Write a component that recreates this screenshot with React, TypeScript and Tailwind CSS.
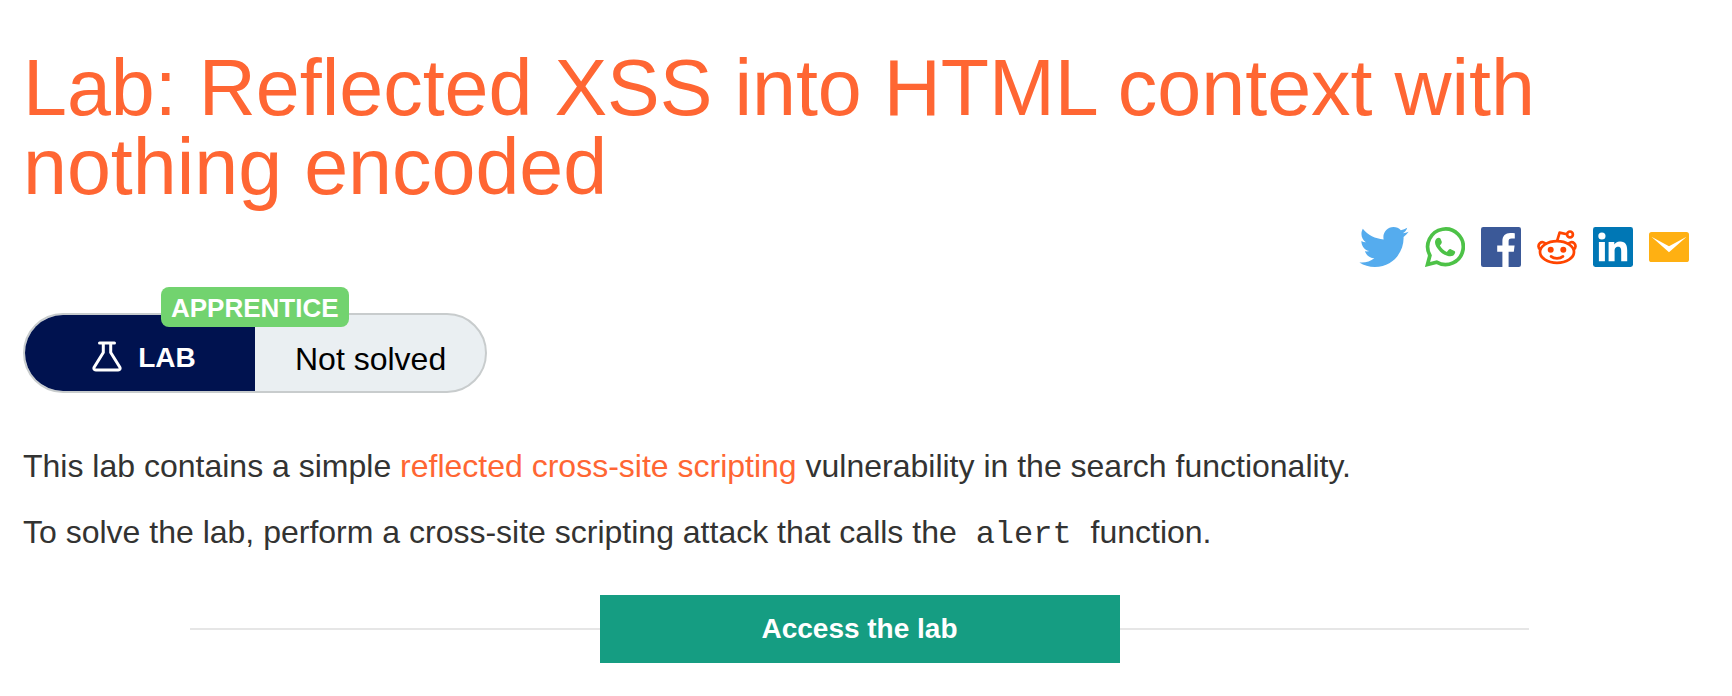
import { FaTwitter } from "react-icons/fa";

const shareClass = "block h-10 w-10";

function WhatsAppIcon() {
  return (
    <svg viewBox="0 0 40 40" className={shareClass} aria-hidden="true">
      <path
        d="M2.5 37.5 4.9 28.4A17.8 17.8 0 1 1 11.6 35.2Z"
        fill="none"
        stroke="#4dc247"
        strokeWidth="3.7"
      />
      <path
        d="M12 11.200c1-.8 2.700-.8 3.400.4l1.200 2.700c.4 1 .2 1.800-.5 2.700l-1.200 1.500c1.600 2.900 3.800 5 6.900 6.400l1.900-2.100c.6-.7 1.300-.9 2.100-.6l3.600 1.700c.7.4.9.9.7 1.900-.5 2.200-2.300 3.400-4.800 3.500-2.600 0-7-1.700-10.300-4.900-3.400-3.300-5-6.700-5-9.100 0-1.800.8-3.200 2-4.100z"
        fill="#4dc247"
      />
    </svg>
  );
}

function FacebookIcon() {
  return (
    <svg viewBox="0 0 40 40" className={shareClass} aria-hidden="true">
      <rect width="40" height="40" rx="2.2" fill="#3b5998" />
      <path
        d="M21.4 40V24.800h-5.200v-6.300h5.200V14c0-5.200 3.200-8 7.800-8 2.200 0 4.100.2 4.600.2v5.400h-3.200c-2.500 0-3 1.200-3 2.900v4h6l-.8 6.300h-5.200V40z"
        fill="#fff"
      />
    </svg>
  );
}

function RedditIcon() {
  return (
    <svg viewBox="0 0 40 40" className={shareClass} aria-hidden="true">
      <g fill="none" stroke="#ff4500" strokeWidth="2.7">
        <ellipse cx="20" cy="25" rx="17" ry="10.8" />
        <path d="M3.200 22.500A4 4 0 1 1 9 17.300M31 17.300a4 4 0 1 1 5.800 5.200" />
        <path d="m20 14.400 2.600-8.800 7.300 1.600" strokeLinejoin="round" />
        <circle cx="33" cy="7.4" r="2.9" />
        <path d="M14 29.400c3 2.500 9 2.500 12 0" strokeLinecap="round" />
      </g>
      <circle cx="13.7" cy="22.8" r="3" fill="#ff4500" />
      <circle cx="26.3" cy="22.8" r="3" fill="#ff4500" />
    </svg>
  );
}

function LinkedInIcon() {
  return (
    <svg viewBox="0 0 40 40" className={shareClass} aria-hidden="true">
      <rect width="40" height="40" rx="2.4" fill="#0077b5" />
      <g fill="#fff">
        <circle cx="8.9" cy="9" r="3.6" />
        <path d="M5.900 15h6v19.200h-6zM15.600 15h5.700v2.600c.8-1.500 2.800-3.100 5.700-3.100 6.100 0 7.200 4 7.200 9.100v10.600h-6v-9.500c0-2.200 0-5-3.100-5s-3.500 2.400-3.500 4.900v9.600h-6z" />
      </g>
    </svg>
  );
}

function MailIcon() {
  return (
    <svg viewBox="0 0 40 40" className={shareClass} aria-hidden="true">
      <rect y="5" width="40" height="30" rx="2.6" fill="#ffb012" />
      <path d="M2.400 9.700 20 19.200 37.600 9.700 20 25.200z" fill="#fff" />
    </svg>
  );
}

function FlaskIcon() {
  return (
    <svg
      viewBox="0 0 30 32"
      className="h-8 w-[30px]"
      fill="none"
      stroke="#fff"
      strokeWidth="3"
      strokeLinecap="round"
      strokeLinejoin="round"
      aria-hidden="true"
    >
      <path d="M7.500 2h15M11.300 2.500v9L2.300 26c-.9 1.600-.2 3 1.500 3h22.400c1.700 0 2.400-1.400 1.500-3l-9-14.500v-9" />
    </svg>
  );
}

export default function App() {
  return (
    <main className="bg-white pr-9 pl-[23px] font-['Liberation_Sans',Arial,sans-serif] text-[32px] leading-9 text-[#333332]">
      <h1 className="pt-12 text-[79px] leading-[79px] text-[#ff6633]">
        Lab: Reflected XSS into HTML context with nothing encoded
      </h1>

      <nav aria-label="Share" className="mt-[21px] flex justify-end gap-4 pr-[7px]">
        <a href="#twitter" aria-label="Twitter">
          <FaTwitter viewBox="0 48 512 416" className="block h-10 w-[50px] text-[#55acee]" />
        </a>
        <a href="#whatsapp" aria-label="WhatsApp"><WhatsAppIcon /></a>
        <a href="#facebook" aria-label="Facebook"><FacebookIcon /></a>
        <a href="#reddit" aria-label="Reddit"><RedditIcon /></a>
        <a href="#linkedin" aria-label="LinkedIn"><LinkedInIcon /></a>
        <a href="#email" aria-label="Email"><MailIcon /></a>
      </nav>

      <div className="relative mt-[46px] flex h-20 w-[464px] rounded-full border-2 border-[#c8cccd] bg-[#eaeff2]">
        <div className="flex w-[230px] items-center justify-center gap-4 rounded-l-full bg-[#00124f] pt-2 pl-2 text-[28px] font-bold text-white">
          <FlaskIcon />
          <span className="pt-0.5">LAB</span>
        </div>
        <p className="flex flex-1 items-center pt-3 pl-10 text-black">Not solved</p>
        <span className="absolute -top-7 left-[136px] flex h-10 items-center rounded-lg bg-[#72d36f] px-2.5 pt-0.5 text-[26px] font-bold text-white">
          APPRENTICE
        </span>
      </div>

      <p className="mt-[55px]">
        This lab contains a simple{" "}
        <a href="#reflected" className="text-[#ff6633]">reflected cross-site scripting</a>{" "}
        vulnerability in the search functionality.
      </p>
      <p className="mt-[30px]">
        To solve the lab, perform a cross-site scripting attack that calls the{" "}
        <code className="mx-2.5 font-['Liberation_Mono',monospace]">alert</code>{" "}
        function.
      </p>

      <div className="mx-auto mt-[42px] flex w-4/5 items-center">
        <span className="h-0.5 flex-1 bg-[#e6e6e6]" />
        <a
          href="#lab"
          className="flex h-[68px] w-[520px] items-center justify-center bg-[#159d82] text-[28px] font-bold text-white"
        >
          Access the lab
        </a>
        <span className="h-0.5 flex-1 bg-[#e6e6e6]" />
      </div>
    </main>
  );
}
